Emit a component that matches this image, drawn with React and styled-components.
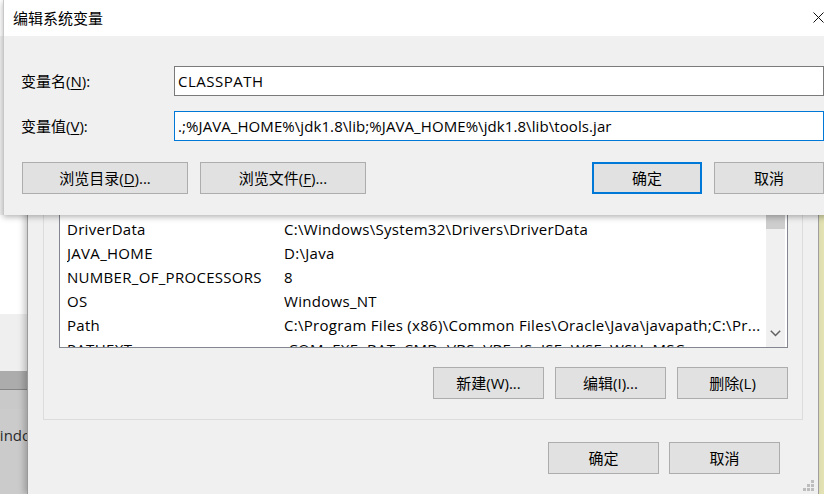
import React from 'react';
import styled, { createGlobalStyle } from 'styled-components';

const FONT = `"Open Sans", "Noto Sans CJK SC", sans-serif`;

const Global = createGlobalStyle`
  html, body { margin: 0; padding: 0; width: 824px; height: 494px; overflow: hidden; }
  body { font-family: ${FONT}; font-size: 15px; color: #000; }
  * { box-sizing: border-box; }
`;

const Desktop = styled.div`
  position: relative;
  width: 824px;
  height: 494px;
  overflow: hidden;
  background: #e2e2b4;
`;

/* ---------- window at far left, behind everything ---------- */
const LeftWindow = styled.div`
  position: absolute;
  left: 0;
  top: 0;
  width: 27px;
  height: 494px;
  display: flex;
  flex-direction: column;
  overflow: hidden;
`;

const Band = styled.div`
  height: ${(p) => p.$h}px;
  flex: ${(p) => (p.$grow ? 1 : 'none')};
  background: ${(p) => p.$bg};
  border-bottom: ${(p) => (p.$line ? `1px solid ${p.$line}` : 'none')};
  font-size: 15px;
  color: #2b2b2b;
  white-space: nowrap;
  overflow: hidden;
`;

const ClippedText = styled.div`
  margin-left: -14px;
  margin-top: ${(p) => p.$top}px;
  font-family: ${FONT};
`;

/* ---------- environment variables dialog ---------- */
const EnvDialog = styled.div`
  position: absolute;
  left: 27px;
  top: 0;
  width: 792px;
  height: 494px;
  background: #f0f0f0;
  border-left: 1px solid #9a9a9a;
  border-right: 1px solid #a0a0a0;
  box-shadow: -3px 0 6px rgba(0, 0, 0, 0.22);
  display: flex;
  flex-direction: column;
  padding: 124px 0 0 15px;
`;

const GroupBox = styled.div`
  width: 760px;
  border: 1px solid #dcdcdc;
  padding: 19px 14px 20px 15px;
  display: flex;
  flex-direction: column;
`;

const ListBox = styled.div`
  width: 729px;
  height: 204px;
  border: 1px solid #828790;
  background: #fff;
  display: flex;
  overflow: hidden;
`;

const Rows = styled.div`
  flex: 1;
  min-width: 0;
  display: flex;
  flex-direction: column;
  overflow: hidden;
`;

const Row = styled.div`
  height: 24px;
  flex: none;
  display: grid;
  grid-template-columns: 217px 1fr;
  align-items: center;
  padding-left: 7px;
  white-space: nowrap;
  font-size: 15px;
  letter-spacing: 0.3px;
  background: ${(p) => (p.$selected ? '#cce8ff' : 'transparent')};
`;

const Cell = styled.span`
  overflow: hidden;
  text-overflow: clip;
`;

const Scrollbar = styled.div`
  width: 19px;
  margin-right: 2px;
  flex: none;
  background: #f0f0f0;
  display: flex;
  flex-direction: column;
  align-items: center;
  padding-top: 17px;
`;

const Thumb = styled.div`
  width: 19px;
  height: 67px;
  background: #cdcdcd;
`;

const ArrowBox = styled.div`
  margin-top: auto;
  height: 22px;
  display: flex;
  align-items: flex-start;
  justify-content: center;
  padding-top: 5px;
`;

const ButtonRow = styled.div`
  display: flex;
  justify-content: ${(p) => p.$justify || 'flex-end'};
  gap: ${(p) => p.$gap}px;
  margin-top: ${(p) => p.$mt || 0}px;
  padding-right: ${(p) => p.$pr || 0}px;
`;

const Button = styled.button`
  width: ${(p) => p.$w}px;
  height: 32px;
  flex: none;
  margin: 0;
  padding: 0 0 1px;
  background: #e1e1e1;
  border: ${(p) => (p.$default ? '2px solid #0078d7' : '1px solid #adadad')};
  font-family: ${FONT};
  font-size: 15px;
  color: #000;
  display: flex;
  align-items: center;
  justify-content: center;
  white-space: nowrap;
`;

const U = styled.span`
  text-decoration: underline;
  text-underline-offset: 2px;
`;

const Grip = styled.svg`
  position: absolute;
  right: 3px;
  bottom: 2px;
`;

/* ---------- edit system variable dialog ---------- */
const EditDialog = styled.div`
  position: absolute;
  left: 3px;
  top: 0;
  width: 839px;
  height: 215px;
  background: #f0f0f0;
  border-left: 1px solid #c8c8c8;
  box-shadow: 0 2px 6px rgba(0, 0, 0, 0.3);
  display: flex;
  flex-direction: column;
`;

const TitleBar = styled.div`
  height: 36px;
  flex: none;
  background: #fff;
  display: flex;
  align-items: center;
  padding-left: 9px;
  padding-bottom: 2px;
  font-size: 15px;
`;

const Title = styled.div`
  flex: 1;
  font-family: ${FONT};
`;

const CloseBtn = styled.div`
  width: 46px;
  height: 34px;
  display: flex;
  align-items: center;
  justify-content: center;
  margin-right: 1px;
`;

const EditBody = styled.div`
  flex: 1;
  display: flex;
  flex-direction: column;
  padding: 30px 18px 21px 17px;
`;

const FieldRow = styled.div`
  display: grid;
  grid-template-columns: 153px 1fr;
  align-items: center;
  height: 30px;
  margin-bottom: ${(p) => p.$mb}px;
`;

const Label = styled.label`
  font-size: 15px;
  white-space: nowrap;
  padding-left: 0;
  margin-top: -2px;
`;

const TextBox = styled.div`
  height: 30px;
  background: #fff;
  border: 1px solid ${(p) => (p.$focused ? '#0078d7' : '#7a7a7a')};
  display: flex;
  align-items: center;
  padding-left: 3px;
  padding-bottom: 1px;
  font-size: 15px;
  letter-spacing: ${(p) => p.$ls}px;
  white-space: nowrap;
  overflow: hidden;
`;

const Spacer = styled.div`
  flex: 1;
`;

const EditButtons = styled.div`
  display: flex;
  gap: 12px;
  padding-left: 1px;
`;

const rows = [
  { name: '变量', value: '值' },
  { name: 'CLASSPATH', value: '.;%JAVA_HOME%\\jdk1.8\\lib;%JAVA_HOME%\\jdk1.8\\lib\\tools.jar', selected: true },
  { name: 'ComSpec', value: 'C:\\Windows\\system32\\cmd.exe' },
  { name: 'DriverData', value: 'C:\\Windows\\System32\\Drivers\\DriverData' },
  { name: 'JAVA_HOME', value: 'D:\\Java' },
  { name: 'NUMBER_OF_PROCESSORS', value: '8' },
  { name: 'OS', value: 'Windows_NT' },
  { name: 'Path', value: 'C:\\Program Files (x86)\\Common Files\\Oracle\\Java\\javapath;C:\\Pr...' },
  { name: 'PATHEXT', value: '.COM;.EXE;.BAT;.CMD;.VBS;.VBE;.JS;.JSE;.WSF;.WSH;.MSC' },
];

export default function App() {
  return (
    <>
      <Global />
      <Desktop>
        <LeftWindow>
          <Band $h={36} $bg="#ffffff" />
          <Band $h={179} $bg="#f0f0f0" />
          <Band $h={99} $bg="#ffffff" />
          <Band $h={57} $bg="#efefef" />
          <Band $h={19} $bg="#acacac" $line="#858585" />
          <Band $h={19} $bg="#c9c9c9" />
          <Band $grow $bg="#cbcbcb">
            <ClippedText $top={16}>Window</ClippedText>
          </Band>
        </LeftWindow>

        <EnvDialog>
          <GroupBox>
            <ListBox>
              <Rows>
                {rows.map((r) => (
                  <Row key={r.name} $selected={r.selected}>
                    <Cell>{r.name}</Cell>
                    <Cell>{r.value}</Cell>
                  </Row>
                ))}
              </Rows>
              <Scrollbar>
                <Thumb />
                <ArrowBox>
                  <svg width="11" height="7" viewBox="0 0 11 7">
                    <path d="M0.8 0.8 L5.5 5.5 L10.2 0.8" fill="none" stroke="#606060" strokeWidth="1.5" />
                  </svg>
                </ArrowBox>
              </Scrollbar>
            </ListBox>
            <ButtonRow $gap={11} $mt={19}>
              <Button $w={111}>新建(W)...</Button>
              <Button $w={111}>编辑(I)...</Button>
              <Button $w={111}>删除(L)</Button>
            </ButtonRow>
          </GroupBox>
          <ButtonRow $gap={10} $mt={22} $pr={38}>
            <Button $w={111}>确定</Button>
            <Button $w={111}>取消</Button>
          </ButtonRow>
          <Grip width="12" height="12" viewBox="0 0 12 12">
            <g fill="#bdbdbd">
              <rect x="8" y="0" width="3" height="3" />
              <rect x="4" y="4" width="3" height="3" />
              <rect x="8" y="4" width="3" height="3" />
              <rect x="0" y="8" width="3" height="3" />
              <rect x="4" y="8" width="3" height="3" />
              <rect x="8" y="8" width="3" height="3" />
            </g>
          </Grip>
        </EnvDialog>

        <EditDialog>
          <TitleBar>
            <Title>编辑系统变量</Title>
            <CloseBtn>
              <svg width="11" height="11" viewBox="0 0 11 11">
                <path d="M0.5 0.5 L10.5 10.5 M10.5 0.5 L0.5 10.5" stroke="#111" strokeWidth="1" fill="none" />
              </svg>
            </CloseBtn>
          </TitleBar>
          <EditBody>
            <FieldRow $mb={15}>
              <Label>
                变量名(<U>N</U>):
              </Label>
              <TextBox $ls={0.5}>CLASSPATH</TextBox>
            </FieldRow>
            <FieldRow $mb={21}>
              <Label>
                变量值(<U>V</U>):
              </Label>
              <TextBox $focused $ls={0.08}>
                .;%JAVA_HOME%\jdk1.8\lib;%JAVA_HOME%\jdk1.8\lib\tools.jar
              </TextBox>
            </FieldRow>
            <EditButtons>
              <Button $w={166}>
                浏览目录(<U>D</U>)...
              </Button>
              <Button $w={166}>
                浏览文件(<U>F</U>)...
              </Button>
              <Spacer />
              <Button $w={110} $default>
                确定
              </Button>
              <Button $w={110}>取消</Button>
            </EditButtons>
          </EditBody>
        </EditDialog>
      </Desktop>
    </>
  );
}
